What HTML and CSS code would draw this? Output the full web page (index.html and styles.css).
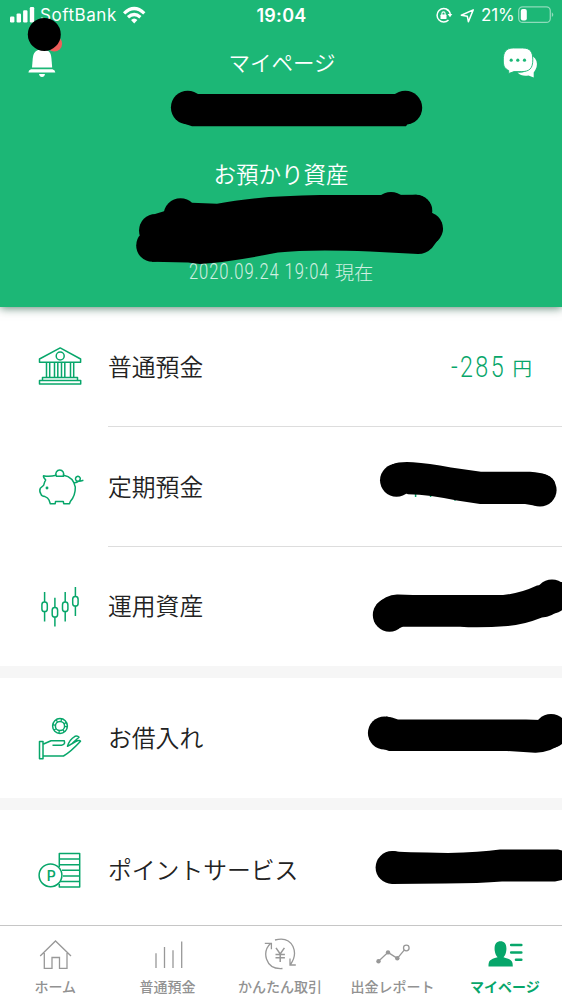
FILE: index.html
```html
<!DOCTYPE html>
<html lang="ja">
<head>
<meta charset="utf-8">
<title>マイページ</title>
<link rel="stylesheet" href="styles.css">
</head>
<body>
<div class="screen">
  <header class="hero">
    <div class="status">
      <div class="status-left">
        <svg class="signal" width="26" height="16" viewBox="9 7 26 16"><g fill="#fff"><rect x="10" y="16.5" width="4.4" height="6" rx="1.2"/><rect x="16.6" y="13.4" width="4.4" height="9.1" rx="1.2"/><rect x="23.1" y="10.2" width="4.4" height="12.3" rx="1.2"/><rect x="29.8" y="7" width="4.4" height="15.5" rx="1.2"/></g></svg>
        <span class="carrier">SoftBank</span>
        <svg width="24" height="18" viewBox="123 6 24 18"><g fill="none" stroke="#fff" stroke-width="3.2"><path d="M125.1 13.3Q135.200 3.600 145.300 13.300"/><path d="M129 17.300Q135.200 11.600 141.400 17.300"/></g><path d="M132 20.100Q135.200 17.100 138.400 20.100L135.200 23.400Z" fill="#fff"/></svg>
      </div>
      <div class="clock">19:04</div>
      <div class="status-right">
        <svg width="40" height="18" viewBox="435 6 40 18"><path d="M448.500 10.500A6.700 6.700 0 1 0 448.500 20" fill="none" stroke="#fff" stroke-width="1.500"/><path d="M446.500 9.200Q450.300 11 450.300 15" fill="none" stroke="#fff" stroke-width="1.500"/><path d="M447.600 14H452.300L450 17.200Z" fill="#fff"/><rect x="440.500" y="14.500" width="6" height="4.600" rx=".7" fill="#fff"/><path d="M441.900 15V13.500a1.600 1.600 0 0 1 3.200 0V15" fill="none" stroke="#fff" stroke-width="1.100"/><path d="M461.300 15.200 473.200 9.900 468.400 21.800 467.300 16.200Z" fill="none" stroke="#fff" stroke-width="1.500" stroke-linejoin="round"/></svg>
        <span class="percent">21%</span>
        <svg width="37" height="18" viewBox="517 6 37 18"><rect x="518.700" y="6.800" width="31.600" height="15.600" rx="4" fill="none" stroke="#fff" stroke-opacity=".5" stroke-width="1.300"/><rect x="520.800" y="9" width="6" height="11.400" rx="2" fill="#fff"/><path d="M551.800 12.200q3 2.400 0 4.900Z" fill="#fff" fill-opacity=".5"/></svg>
      </div>
    </div>
    <div class="nav">
      <svg width="40" height="42" viewBox="24 37 40 42"><circle cx="54.300" cy="43.800" r="7.800" fill="#ee5d5a"/><g fill="#fff"><path d="M38 50C34.600 51.500 33.200 53.800 32.800 58L32 67.500H52.200L51.400 58C51 53.500 49.500 51.200 46 50Z"/><path d="M31 69.300H52.500Q55.300 70.200 55.300 72.600H28.400Q28.400 70.200 31 69.300Z"/><path d="M39 74H45Q44.500 77 42 77T39 74Z"/></g></svg>
      <h1>マイページ</h1>
      <svg width="40" height="34" viewBox="500 45 40 34"><path d="M533 56.500Q538 60 536.600 67Q535.600 70 533.700 72.500V77.400L528.500 75.500Q521.500 76.700 517.500 72.600Q531.500 74 533 56.500Z" fill="#fff"/><path d="M513.500 48H522.500C530.500 48 532.800 52 532.800 59.800C532.800 68.500 529.500 71.600 521.500 71.600H514L508.700 73.500V70.500C504.500 68.500 503.300 66 503.300 60C503.300 52 506 48 513.500 48Z" fill="#fff" stroke="#1cb776" stroke-width=".9"/><g fill="#1cb776"><circle cx="511.200" cy="60.200" r="1.600"/><circle cx="517.800" cy="60.200" r="1.600"/><circle cx="524.500" cy="60.200" r="1.600"/></g></svg>
    </div>
    <h2>お預かり資産</h2>
    <div class="date"><span class="stamp-box"><span class="num stamp">2020.09.24 19:04</span></span><span>現在</span></div>
    <svg class="ink" width="562" height="307" viewBox="0 0 562 307"><circle cx="44.300" cy="34.400" r="16.500"/><circle cx="187.700" cy="107.500" r="16.800"/><circle cx="405.300" cy="107.700" r="16.900"/><path d="M190 93.900H403Q420 110 406 126.200H192Q178 123 173 113Z"/><circle cx="180.500" cy="215.300" r="17"/><circle cx="155.500" cy="230.500" r="16.500"/><circle cx="152.500" cy="245.500" r="16.300"/><circle cx="391" cy="209" r="17"/><circle cx="416" cy="211" r="16.300"/><circle cx="426.500" cy="228.500" r="16.500"/><path d="M155 214 192 202.700 217 203.700Q255 196 320 195H378L416 194.700Q432 197 432 213L443 229Q442 235 432 248Q426 254 418 254L370 251.500Q310 249 278 252.500Q230 262 200 264L188 262.500 152 261.800Z"/></svg>
  </header>
  <main>
    <section class="group">
      <div class="row">
        <svg class="icon" width="48" height="48" viewBox="37 343 48 48"><path d="M39.500 362.300V359L60.200 347.900 80.600 359V362.300ZM46.500 362.500V377M49.700 362.500V377M54.500 362.500V377M57.800 362.500V377M61.500 362.500V377M64.800 362.500V377M70.500 362.500V377M73.700 362.500V377M42.500 380.500V377.400H77.500V380.500M39.500 380.500H80.700V384H39.500Z"/><circle cx="60.200" cy="356" r="4"/></svg>
        <span class="label">普通預金</span>
        <div class="amount"><span class="value-box"><span class="num value">-285</span></span><span class="yen">円</span></div>
      </div>
      <div class="row">
        <svg class="icon" width="48" height="48" viewBox="37 463 48 48"><path d="M56.200 475.300Q49 477 43.500 475.700Q43 477 45.700 480Q44.700 481 43.700 485.200L40.300 488.200Q39 491 41 494.200Q41.300 496.300 45 496.600Q48 497.600 49 500L50.300 503.700H55.200L55.500 501.500H63.300L63.700 503.700H69.500L70.300 501.500Q75.500 495.500 75.300 487.200Q73.500 477 63.600 475.200"/><path d="M56.300 475.600A3.900 3.900 0 1 1 63.200 475.600M55.800 476.300H64.200M74 483Q80 481.500 80.300 478.800A2.400 2.400 0 1 0 76 480.200Q78 482.300 83.400 480.300"/><circle cx="47" cy="488" r=".7" fill="#07a66a"/></svg>
        <span class="label">定期預金</span>
        <svg class="ink-row" width="212" height="119" viewBox="350 427 212 119"><path d="M415.600 490v7M430.600 490v7M455 496v4.700" stroke="#07a66a" stroke-width="1.500"/><circle cx="396.500" cy="480.300" r="16.500"/><circle cx="540" cy="490" r="16.600"/><path d="M392 464.400Q400 461.300 413 462.300Q428 463.400 451 467.500L481 471.700H530Q552 473 555 483L537 506 525 504H480L457 500.500Q430 494.500 408 494.200L397 490Z"/></svg>
      </div>
      <div class="row">
        <svg class="icon" width="48" height="48" viewBox="37 583 48 48"><path d="M44.600 592V602M44.600 611.600V621.500M54.900 597.800V607.500M54.900 617V626.500M65.200 592V602M65.200 611.600V621.500M75.400 587V596.600M75.400 606V616"/><g><rect x="41.900" y="602.100" width="5.400" height="9.400" rx="2.600"/><rect x="52.200" y="607.600" width="5.400" height="9.400" rx="2.600"/><rect x="62.500" y="602.100" width="5.400" height="9.400" rx="2.600"/><rect x="72.700" y="596.600" width="5.400" height="9.400" rx="2.600"/></g></svg>
        <span class="label">運用資産</span>
        <svg class="ink-row" width="212" height="119" viewBox="350 547 212 119"><circle cx="389.500" cy="615" r="16.700"/><circle cx="552" cy="596.500" r="17"/><path d="M376 605Q386 594 398 594.500L413 595H503Q520 593.500 537 585.500L562 582V608Q552 617 542 617.500Q523 625 508 626Q480 628 460 626.700H403L390 631Z"/></svg>
      </div>
    </section>
    <section class="group">
      <div class="row">
        <svg class="icon" width="48" height="48" viewBox="37 714 48 48"><circle cx="60" cy="726" r="7.400"/><circle cx="60" cy="726" r="4.600"/><circle cx="60" cy="726" r="6" stroke-width="2.600" stroke-dasharray="1.300 3.412"/><path d="M39.500 741.500H43V758.700H39.500ZM43 744.300 51 740.700H64.300Q65.500 745 61.500 745.200H52.500M43 756H63.500Q71 751.500 80.500 741.200Q79.500 739.500 75.700 741.500L67.500 746.300Q69.300 739.500 75 736.300Q77.500 735.200 79 737.200L72.500 743"/></svg>
        <span class="label">お借入れ</span>
        <svg class="ink-row" width="212" height="119" viewBox="350 679 212 119"><circle cx="384.500" cy="734" r="16.600"/><circle cx="551" cy="732" r="17"/><path d="M386 717.500Q392 718 398 720.500H526L541 721 562 722V744Q550 754 535 753.700L507 752H389L378 748Z"/></svg>
      </div>
    </section>
    <section class="group last">
      <div class="row">
        <svg class="icon" width="48" height="48" viewBox="37 846 48 48"><path d="M59.300 867V853.500H79.700V886.900H59.300V884M59.300 859H79.700M59.300 864.700H79.700M62 870.300H79.700M63 875.900H79.700M60 881.400H79.700"/><circle cx="50.500" cy="875.300" r="11.400"/><text class="point" x="46.700" y="880.600">P</text></svg>
        <span class="label">ポイントサービス</span>
        <svg class="ink-row" width="212" height="119" viewBox="350 810 212 119"><circle cx="392" cy="867.500" r="16.400"/><path d="M392 851.100Q402 852.500 448 852.900Q480 852.500 500 849.500H558L562 850.500V880L555 881.500H502Q480 883.300 445 883.500L392 884Z"/></svg>
      </div>
    </section>
  </main>
  <nav class="tabs">
    <div class="tab"><svg width="40" height="34" viewBox="36 938 40 34"><path d="M40.200 956 55.500 941 71 956M44.300 953V968.300H52V957.500H59.500V968.300H67V953"/></svg><span>ホーム</span></div>
    <div class="tab"><svg width="40" height="34" viewBox="148 938 40 34"><path d="M155 953.300V968M163.500 947V968M172 950.200V968M180.700 941.500V968"/></svg><span>普通預金</span></div>
    <div class="tab"><svg width="40" height="34" viewBox="261 938 40 34"><path d="M270.700 943.300Q263.700 950 266.500 959Q270 969.500 282.500 968.500M264.800 943.300H271.400V949.300M275 940Q288 936.500 293 946.500Q297 955.500 290.500 964.500M290 958.500V965H295.800"/><path d="M276 947.800 280.200 954 284.400 947.800M280.200 954V962M275.500 954.500H284.900M275.500 957.800H284.900" stroke-width="1.500"/></svg><span>かんたん取引</span></div>
    <div class="tab"><svg width="40" height="34" viewBox="373 938 40 34"><path d="M378.500 961.300 388 952.400 397.300 958.300 404.200 950.200"/><g fill="#989898" stroke="none"><circle cx="378.500" cy="961.300" r="2.200"/><circle cx="388" cy="952.400" r="2.200"/><circle cx="397.300" cy="958.300" r="2.200"/></g><circle cx="406.300" cy="948" r="2.800"/></svg><span>出金レポート</span></div>
    <div class="tab active"><svg width="40" height="34" viewBox="486 938 40 34"><path fill="#07a66a" stroke="none" d="M488.500 966.500C488.500 960.500 489.500 959.600 497.600 957.200C495.700 955.400 495.200 953.500 494.700 950.500C494 944 496.500 941.200 500.500 941.200S507 944 506.300 950.500C505.900 953.500 505.300 955.400 503.500 957.200C511.500 959.600 512.800 960.500 512.800 966.500Z"/><path d="M511.200 945H521.300M511.200 952.500H521.300M516 959.800H521.300" stroke-width="2.600" stroke-linecap="round"/></svg><span>マイページ</span></div>
  </nav>
</div>
</body>
</html>
```
FILE: styles.css
```css
* { box-sizing: border-box; }
body {
  margin: 0;
  background: #fff;
  color: #222;
  font-family: "Noto Sans CJK JP", sans-serif;
  font-weight: 350;
}
svg { display: block; flex: none; }
h1, h2 { margin: 0; font-weight: 350; }
.screen {
  width: 562px;
  height: 999px;
  overflow: hidden;
  display: flex;
  flex-direction: column;
}
.hero {
  position: relative;
  z-index: 1;
  height: 307px;
  flex: none;
  background: #1cb776;
  color: #fff;
  box-shadow: 0 1px 9px rgba(0, 65, 38, .65);
}
.ink { position: absolute; inset: 0; }
.status {
  display: grid;
  grid-template-columns: 1fr auto 1fr;
  align-items: center;
  height: 30px;
  padding: 0 8px 0 9px;
  font-family: Inter, "Liberation Sans", sans-serif;
  font-size: 17px;
  font-weight: 400;
}
.status-left, .status-right { display: flex; align-items: center; }
.status-right { justify-content: flex-end; }
.carrier { width: 76px; margin: 0 6px 0 5px; letter-spacing: .55px; }
.clock { font-size: 18px; font-weight: 600; letter-spacing: .3px; }
.percent { width: 36px; margin-left: 6px; letter-spacing: -.1px; }
.nav {
  display: flex;
  justify-content: space-between;
  align-items: center;
  height: 56px;
  padding: 0 22px 0 24px;
}
.nav h1 { font-size: 21.5px; line-height: 30px; margin-top: 7px; }
.nav > svg:last-child { margin-top: 8px; }
.hero h2 {
  margin-top: 70px;
  text-align: center;
  font-size: 22.5px;
  line-height: 34px;
}
.date {
  display: flex;
  align-items: center;
  justify-content: center;
  gap: 4px;
  height: 28px;
  margin-top: 68px;
  font-size: 19.3px;
  font-weight: 300;
  line-height: 28px;
  opacity: .8;
}
.num {
  display: block;
  font-family: Roboto, sans-serif;
  font-weight: 300;
  white-space: nowrap;
  transform-origin: 0 50%;
}
.stamp-box { width: 142px; }
.stamp { width: 180px; font-size: 21.5px; letter-spacing: 1.2px; transform: scaleX(.77); }
main { flex: 1; min-height: 0; background: #fff; }
.group { border-bottom: 12px solid #f6f6f6; }
.last { border-bottom: 0; }
.row {
  position: relative;
  display: flex;
  align-items: center;
  height: 120px;
  padding-left: 37px;
}
.row:last-child { height: 119px; }
.row:only-child { height: 120px; }
.row:not(:last-child)::after {
  content: "";
  position: absolute;
  left: 108px;
  right: 0;
  bottom: 0;
  height: 1px;
  background: #ddd;
}
.icon { fill: none; stroke: #07a66a; stroke-width: 1.5; stroke-linejoin: round; }
.point { fill: #07a66a; stroke: none; font: 500 14px Roboto, sans-serif; }
.label { margin: -3px 0 0 23px; font-size: 23.8px; line-height: 36px; white-space: nowrap; }
.amount {
  display: flex;
  align-items: center;
  gap: 7px;
  margin-left: auto;
  margin-right: 30px;
  color: #07a66a;
}
.value-box { width: 54px; }
.value { width: 70px; font-size: 29.5px; line-height: 40px; letter-spacing: 3px; transform: scaleX(.79); }
.yen { font-size: 19.5px; line-height: 28px; margin-top: 2px; }
.ink-row { position: absolute; right: 0; top: 0; }
.tabs {
  position: relative;
  display: grid;
  grid-template-columns: repeat(5, 1fr);
  height: 74px;
  flex: none;
  border-top: 1px solid #c6c6c6;
  background: #fff;
}
.tab {
  display: flex;
  flex-direction: column;
  align-items: center;
  padding-top: 12px;
  color: #929292;
  font-size: 14px;
  font-weight: 500;
  line-height: 20px;
  white-space: nowrap;
}
.tab svg { fill: none; stroke: #989898; stroke-width: 1.3; }
.tab span { margin: 4px 2px 0 0; }
.active { color: #07a66a; font-weight: 700; }
.tab.active svg { stroke: #07a66a; }
```
